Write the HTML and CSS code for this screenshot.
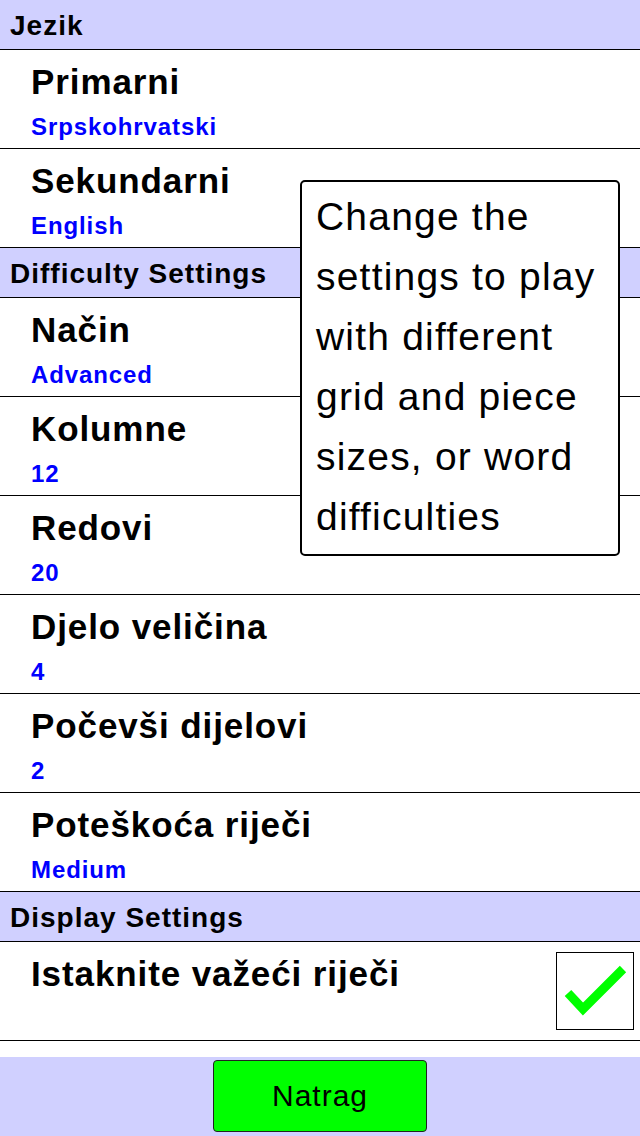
FILE: index.html
```html
<!DOCTYPE html>
<html lang="hr">
<head>
  <meta charset="UTF-8">
  <meta name="viewport" content="width=device-width, initial-scale=1.0">
  <title>Postavke</title>
  <link rel="stylesheet" href="styles.css">
</head>
<body>
  <div class="screen">
    <div class="settings">
      <div class="section">Jezik</div>
      <div class="item">
        <div class="item-title">Primarni</div>
        <div class="item-value">Srpskohrvatski</div>
      </div>
      <div class="item">
        <div class="item-title">Sekundarni</div>
        <div class="item-value">English</div>
      </div>

      <div class="section">Difficulty Settings</div>
      <div class="item">
        <div class="item-title">Način</div>
        <div class="item-value">Advanced</div>
      </div>
      <div class="item">
        <div class="item-title">Kolumne</div>
        <div class="item-value">12</div>
      </div>
      <div class="item">
        <div class="item-title">Redovi</div>
        <div class="item-value">20</div>
      </div>
      <div class="item">
        <div class="item-title">Djelo veličina</div>
        <div class="item-value">4</div>
      </div>
      <div class="item">
        <div class="item-title">Počevši dijelovi</div>
        <div class="item-value">2</div>
      </div>
      <div class="item">
        <div class="item-title">Poteškoća riječi</div>
        <div class="item-value">Medium</div>
      </div>

      <div class="section">Display Settings</div>
      <div class="item item-toggle">
        <div class="item-title">Istaknite važeći riječi</div>
        <span class="checkbox">
          <svg width="76" height="76" viewBox="0 0 76 76">
            <polyline points="11,40 26,56 66,16" fill="none" stroke="#00ff00" stroke-width="9"/>
          </svg>
        </span>
      </div>
      <!-- next row is scrolled under the bottom bar -->
      <div class="item"></div>
    </div>

    <!-- hint bubble shown over the list -->
    <div class="tooltip">Change the settings to play with different grid and piece sizes, or word difficulties</div>

    <div class="bottom-bar">
      <button class="back-btn">Natrag</button>
    </div>
  </div>
</body>
</html>
```

FILE: styles.css
```css
body {
  margin: 0;
  padding: 0;
  background: #fff;
  font-family: "Liberation Sans", Arial, sans-serif;
  color: #000;
}

.screen {
  position: relative;
  width: 640px;
  height: 1136px;
  display: flex;
  flex-direction: column;
  overflow: hidden;
}

.settings {
  flex: 1;
  overflow: hidden;
}

.section {
  height: 50px;
  box-sizing: border-box;
  padding: 2px 0 0 10px;
  line-height: 47px;
  background: #d0d0ff;
  border-bottom: 1px solid #000;
  font-size: 28px;
  font-weight: bold;
  letter-spacing: 1px;
}

.item {
  height: 99px;
  box-sizing: border-box;
  padding: 12px 6px 0 31px;
  border-bottom: 1px solid #000;
}

.item-title {
  font-size: 35px;
  font-weight: bold;
  line-height: 40px;
  letter-spacing: 0.9px;
}

.item-value {
  margin-top: 10px;
  font-size: 24px;
  font-weight: bold;
  line-height: 30px;
  letter-spacing: 0.9px;
  color: #0000ff;
}

.item-toggle {
  display: flex;
  justify-content: space-between;
  align-items: flex-start;
}

.checkbox {
  display: block;
  width: 78px;
  height: 78px;
  margin-top: -2px;
  box-sizing: border-box;
  border: 1px solid #000;
  background: #fff;
}

.checkbox svg {
  display: block;
}

.tooltip {
  position: absolute;
  left: 300px;
  top: 180px;
  width: 320px;
  box-sizing: border-box;
  padding: 5px 12px 7px 14px;
  background: #fff;
  border: 2px solid #000;
  border-radius: 5px;
  font-size: 39px;
  line-height: 60px;
  letter-spacing: 1.2px;
}

.bottom-bar {
  height: 79px;
  box-sizing: border-box;
  padding-top: 3px;
  background: #d0d0ff;
  display: flex;
  justify-content: center;
  align-items: flex-start;
}

.back-btn {
  width: 214px;
  height: 72px;
  background: #00ff00;
  border: 1px solid #222;
  border-radius: 4px;
  font-family: "Liberation Sans", Arial, sans-serif;
  font-size: 30px;
  letter-spacing: 1px;
  color: #000;
  padding: 0;
}
```
